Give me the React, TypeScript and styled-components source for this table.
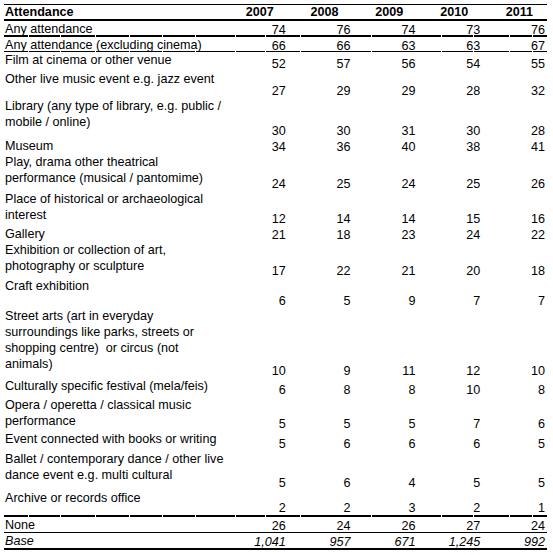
import styled, { createGlobalStyle } from "styled-components";

const GlobalStyle = createGlobalStyle`
  html, body {
    margin: 0;
    padding: 0;
    background: #ffffff;
  }
  body {
    font-family: "Liberation Sans", Arial, sans-serif;
    color: #000000;
  }
`;

interface IRow {
  label: string[];
  values: string[];
  height: number;
}

const YEARS = ["2007", "2008", "2009", "2010", "2011"];

// little breaks in the ruled lines, where the source table had cell edges
const GAPS = [29, 61, 96, 130, 163, 196, 236, 266, 301, 372, 442, 474, 510, 533];
const TABLE_LEFT = 4;
const TABLE_WIDTH = 543;

const BODY_ROWS: IRow[] = [
  { label: ["Film at cinema or other venue"], values: ["52", "57", "56", "54", "55"], height: 19 },
  { label: ["Other live music event e.g. jazz event"], values: ["27", "29", "29", "28", "32"], height: 27 },
  {
    label: ["Library (any type of library, e.g. public /", "mobile / online)"],
    values: ["30", "30", "31", "30", "28"],
    height: 40,
  },
  { label: ["Museum"], values: ["34", "36", "40", "38", "41"], height: 16 },
  {
    label: ["Play, drama other theatrical", "performance (musical / pantomime)"],
    values: ["24", "25", "24", "25", "26"],
    height: 37,
  },
  {
    label: ["Place of historical or archaeological", "interest"],
    values: ["12", "14", "14", "15", "16"],
    height: 35,
  },
  { label: ["Gallery"], values: ["21", "18", "23", "24", "22"], height: 16 },
  {
    label: ["Exhibition or collection of art,", "photography or sculpture"],
    values: ["17", "22", "21", "20", "18"],
    height: 36,
  },
  { label: ["Craft exhibition"], values: ["6", "5", "9", "7", "7"], height: 30 },
  {
    label: [
      "Street arts (art in everyday",
      "surroundings like parks, streets or",
      "shopping centre)\u00a0 or circus (not",
      "animals)",
    ],
    values: ["10", "9", "11", "12", "10"],
    height: 70,
  },
  { label: ["Culturally specific festival (mela/feis)"], values: ["6", "8", "8", "10", "8"], height: 19 },
  {
    label: ["Opera / operetta / classical music", "performance"],
    values: ["5", "5", "5", "7", "6"],
    height: 34,
  },
  { label: ["Event connected with books or writing"], values: ["5", "6", "6", "6", "5"], height: 20 },
  {
    label: ["Ballet / contemporary dance / other live", "dance event e.g. multi cultural"],
    values: ["5", "6", "4", "5", "5"],
    height: 39,
  },
  { label: ["Archive or records office"], values: ["2", "2", "3", "2", "1"], height: 25 },
];

const Rule = ({ size, broken }: { size: number; broken?: boolean }) => {
  if (!broken) return <SolidRule $size={size} />;
  const edges = [TABLE_LEFT, ...GAPS, TABLE_LEFT + TABLE_WIDTH];
  return (
    <BrokenRule $size={size}>
      {edges.slice(0, -1).map((start, i) => (
        <Segment key={start} style={{ width: edges[i + 1] - start - (i < edges.length - 2 ? 1 : 0) }} />
      ))}
    </BrokenRule>
  );
};

const App = () => {
  return (
    <Page>
      <GlobalStyle />
      <Table>
        <Rule size={1} />
        <Row $height={14}>
          <HeadLabel>Attendance</HeadLabel>
          {YEARS.map((y) => (
            <HeadYear key={y}>{y}</HeadYear>
          ))}
        </Row>
        <Rule size={2} />
        <Row $height={14}>
          <Label>Any attendance</Label>
          {["74", "76", "74", "73", "76"].map((v, i) => (
            <Value key={i}>{v}</Value>
          ))}
        </Row>
        <Rule size={2} broken />
        <Row $height={14}>
          <Label>Any attendance (excluding cinema)</Label>
          {["66", "66", "63", "63", "67"].map((v, i) => (
            <Value key={i}>{v}</Value>
          ))}
        </Row>
        <Rule size={1} broken />
        {BODY_ROWS.map((row) => (
          <Row key={row.label[0]} $height={row.height}>
            <Label>
              {row.label.map((line, i) => (
                <span key={i}>
                  {line}
                  {i < row.label.length - 1 && <br />}
                </span>
              ))}
            </Label>
            {row.values.map((v, i) => (
              <Value key={i}>{v}</Value>
            ))}
          </Row>
        ))}
        <Rule size={2} broken />
        <Row $height={15}>
          <Label>None</Label>
          {["26", "24", "26", "27", "24"].map((v, i) => (
            <Value key={i}>{v}</Value>
          ))}
        </Row>
        <Rule size={1} />
        <Row $height={15} $italic>
          <Label>Base</Label>
          {["1,041", "957", "671", "1,245", "992"].map((v, i) => (
            <Value key={i}>{v}</Value>
          ))}
        </Row>
        <Rule size={2} />
      </Table>
    </Page>
  );
};

const Page = styled.div`
  padding: 4px 0 0 4px;
  width: 553px;
  height: 555px;
  box-sizing: border-box;
`;

const Table = styled.div`
  width: 543px;
  display: flex;
  flex-direction: column;
  font-size: 12.6px;
`;

const SolidRule = styled.div<{ $size: number }>`
  height: ${(p) => p.$size}px;
  background: #000000;
`;

const BrokenRule = styled.div<{ $size: number }>`
  display: flex;
  gap: 1px;
  height: ${(p) => p.$size}px;
`;

const Segment = styled.div`
  height: 100%;
  background: #000000;
`;

const Row = styled.div<{ $height: number; $italic?: boolean }>`
  display: grid;
  grid-template-columns: 219px repeat(5, 64.8px);
  height: ${(p) => p.$height}px;
  font-style: ${(p) => (p.$italic ? "italic" : "normal")};
`;

const Label = styled.div`
  align-self: start;
  padding-left: 1px;
  line-height: 16px;
  white-space: nowrap;
`;

const Value = styled.div`
  align-self: end;
  text-align: right;
  padding-right: 2px;
  line-height: 16px;
  margin-bottom: -1px;
`;

const HeadLabel = styled.div`
  font-weight: 700;
  padding-left: 1px;
  line-height: 14px;
`;

const HeadYear = styled.div`
  font-weight: 700;
  text-align: right;
  padding-right: 14px;
  line-height: 14px;
`;

export default App;
